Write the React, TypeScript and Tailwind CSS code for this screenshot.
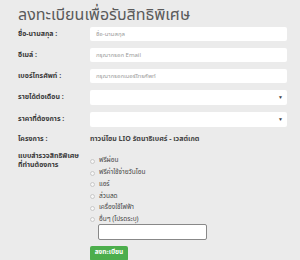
const options = [
  "ฟรีผ่อน",
  "ฟรีค่าใช้จ่ายวันโอน",
  "แอร์",
  "ส่วนลด",
  "เครื่องใช้ไฟฟ้า",
  "อื่นๆ (โปรดระบุ)",
];

function Label({ children }: { children: React.ReactNode }) {
  return <div className="w-[72px] shrink-0 text-[7px] font-bold text-[#3a3a3a] leading-[9px]">{children}</div>;
}

function TextInput({ placeholder }: { placeholder: string }) {
  return (
    <div className="flex h-[14px] flex-1 items-center rounded-[2px] bg-white px-[6px] text-[6px] text-[#9a9a9a]">
      {placeholder}
    </div>
  );
}

function Select() {
  return (
    <div className="flex h-[15px] flex-1 items-center justify-end rounded-[2px] bg-white pr-[4px] text-[5px] text-[#444]">
      ▼
    </div>
  );
}

export default function App() {
  return (
    <div
      className="h-[260px] w-[300px] overflow-hidden bg-[#ebebeb] pl-[18px] pr-[13px] pt-[4px]"
      style={{ fontFamily: '"Noto Sans Thai", Tahoma, "Liberation Sans", sans-serif' }}
    >
      <h1 className="text-[16px] font-normal leading-[22px] text-[#5a5a5a]">ลงทะเบียนเพื่อรับสิทธิพิเศษ</h1>

      <div className="mt-[1px] flex flex-col gap-[7px]">
        <div className="flex items-center">
          <Label>ชื่อ-นามสกุล :</Label>
          <TextInput placeholder="ชื่อ-นามสกุล" />
        </div>
        <div className="flex items-center">
          <Label>อีเมล์ :</Label>
          <TextInput placeholder="กรุณากรอก Email" />
        </div>
        <div className="flex items-center">
          <Label>เบอร์โทรศัพท์ :</Label>
          <TextInput placeholder="กรุณากรอกเบอร์โทรศัพท์" />
        </div>
        <div className="flex items-center">
          <Label>รายได้ต่อเดือน :</Label>
          <Select />
        </div>
        <div className="flex items-center">
          <Label>ราคาที่ต้องการ :</Label>
          <Select />
        </div>
      </div>

      <div className="mt-[7px] flex items-center">
        <Label>โครงการ :</Label>
        <div className="text-[7px] font-bold text-[#444]">ทาวน์โฮม LIO รัตนาธิเบศร์ - เวสต์เกต</div>
      </div>

      <div className="mt-[7px] flex">
        <Label>
          แบบสำรวจสิทธิพิเศษ
          <br />
          ที่ท่านต้องการ
        </Label>
        <div className="flex flex-col pt-[4px]">
          {options.map((o) => (
            <div key={o} className="flex h-[11.7px] items-center gap-[4px]">
              <span className="h-[5px] w-[5px] rounded-full border border-[#c8c8c8] bg-[#f6f6f6]" />
              <span className="text-[6.5px] text-[#444]">{o}</span>
            </div>
          ))}
          <div className="ml-[8px] mt-[-2px] h-[16px] w-[109px] rounded-[2px] border border-[#888] bg-white" />
          <button className="mt-[6px] h-[15px] w-[38px] rounded-[2px] bg-[#4cae4c] text-[6.5px] font-bold text-white">
            ลงทะเบียน
          </button>
        </div>
      </div>
    </div>
  );
}
